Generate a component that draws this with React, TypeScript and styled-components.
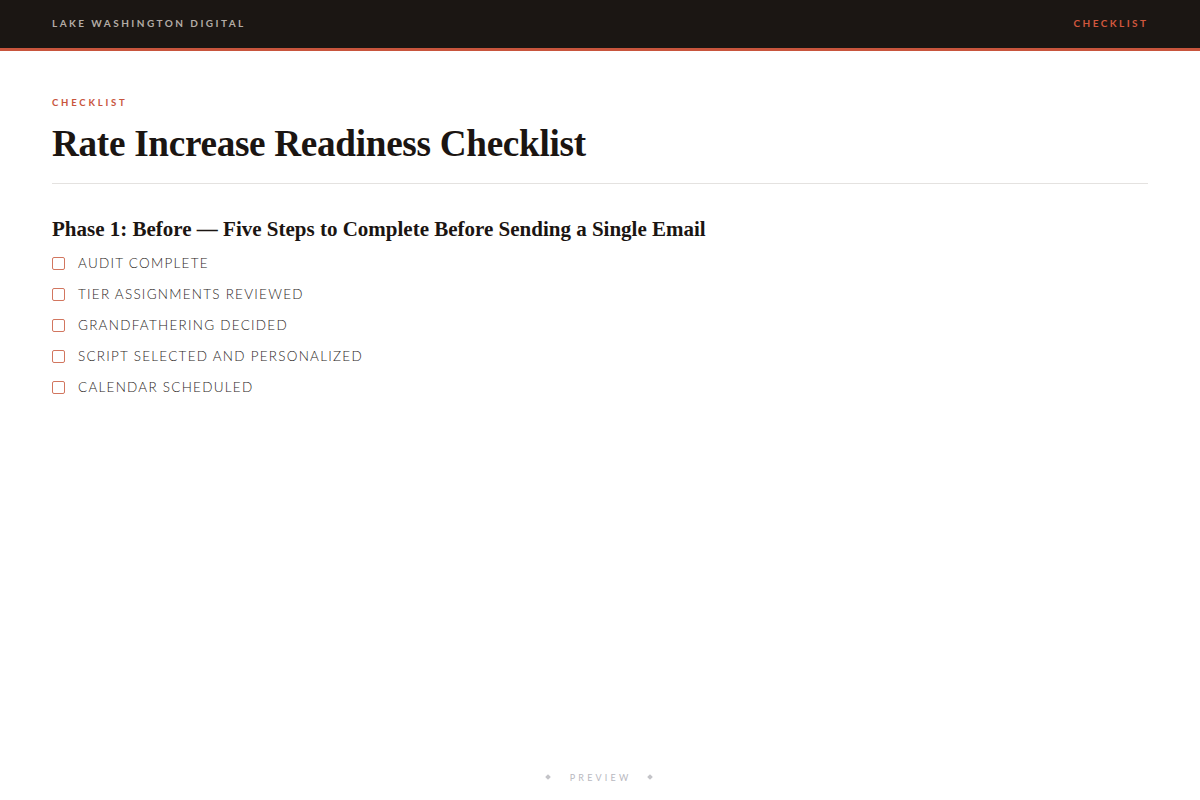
import React from "react";
import styled, { createGlobalStyle } from "styled-components";

const Global = createGlobalStyle`
  html, body { margin: 0; padding: 0; background: #ffffff; }
  body { font-family: "Lato", "Noto Sans", sans-serif; color: #1b1512; }
  #root { min-height: 100vh; }
`;

const Page = styled.div`
  min-height: 800px;
  display: flex;
  flex-direction: column;
`;

const TopBar = styled.header`
  height: 48px;
  background: #1b1613;
  border-bottom: 3px solid #c8553d;
  display: flex;
  align-items: center;
  justify-content: space-between;
  padding: 0 52px;
`;

const BarLabel = styled.span<{ $accent?: boolean }>`
  font-family: "Lato", "Noto Sans", sans-serif;
  font-size: 10px;
  font-weight: 700;
  letter-spacing: 2.45px;
  text-transform: uppercase;
  color: ${(p) => (p.$accent ? "#d0573e" : "#b3aca6")};
  margin-right: ${(p) => (p.$accent ? "-0.5px" : "0")};
  line-height: 1;
  margin-top: -2px;
`;

const Main = styled.main`
  flex: 1;
  padding: 46px 52px 0;
`;

const Eyebrow = styled.div`
  font-family: "Lato", "Noto Sans", sans-serif;
  font-size: 9.5px;
  font-weight: 700;
  letter-spacing: 2.8px;
  color: #c8553d;
  text-transform: uppercase;
  line-height: 12px;
`;

const Title = styled.h1`
  margin: 13px 0 0;
  font-family: "Liberation Serif", "DejaVu Serif", serif;
  font-weight: 700;
  font-size: 37.2px;
  line-height: 44px;
  color: #1b1512;
  letter-spacing: -0.3px;
`;

const Rule = styled.hr`
  border: none;
  border-top: 1px solid #e4e2e0;
  margin: 17px 0 0;
`;

const PhaseTitle = styled.h2`
  margin: 32px 0 0;
  font-family: "Liberation Serif", "DejaVu Serif", serif;
  font-weight: 700;
  font-size: 21px;
  line-height: 26px;
  color: #1b1512;
`;

const List = styled.ul`
  list-style: none;
  margin: 10px 0 0;
  padding: 0;
  display: flex;
  flex-direction: column;
  gap: 10px;
`;

const Item = styled.li`
  display: flex;
  align-items: center;
  gap: 13px;
  height: 21px;
`;

const Box = styled.span`
  width: 11px;
  height: 11px;
  border: 1px solid #d2765f;
  border-radius: 2px;
  flex-shrink: 0;
  margin-top: 2px;
`;

const ItemText = styled.span`
  font-family: "Lato", "Noto Sans", sans-serif;
  font-weight: 300;
  font-size: 13.5px;
  letter-spacing: 1.25px;
  color: #2b2624;
  text-transform: uppercase;
`;

const Footer = styled.footer`
  height: 46px;
  display: flex;
  align-items: center;
  justify-content: center;
  gap: 18px;
  padding-right: 2px;
  box-sizing: border-box;
`;

const Diamond = styled.span`
  width: 4px;
  height: 4px;
  background: #c4c4c8;
  transform: rotate(45deg);
`;

const FooterText = styled.span`
  font-family: "Lato", "Noto Sans", sans-serif;
  font-size: 9px;
  letter-spacing: 3.2px;
  color: #b8b8c0;
  margin-right: -3.2px;
  padding: 0 2px;
`;

const steps = [
  "Audit complete",
  "Tier assignments reviewed",
  "Grandfathering decided",
  "Script selected and personalized",
  "Calendar scheduled",
];

export default function App() {
  return (
    <Page>
      <Global />
      <TopBar>
        <BarLabel>Lake Washington Digital</BarLabel>
        <BarLabel $accent>Checklist</BarLabel>
      </TopBar>
      <Main>
        <Eyebrow>Checklist</Eyebrow>
        <Title>Rate Increase Readiness Checklist</Title>
        <Rule />
        <PhaseTitle>Phase 1: Before — Five Steps to Complete Before Sending a Single Email</PhaseTitle>
        <List>
          {steps.map((s) => (
            <Item key={s}>
              <Box />
              <ItemText>{s}</ItemText>
            </Item>
          ))}
        </List>
      </Main>
      <Footer>
        <Diamond />
        <FooterText>PREVIEW</FooterText>
        <Diamond />
      </Footer>
    </Page>
  );
}
